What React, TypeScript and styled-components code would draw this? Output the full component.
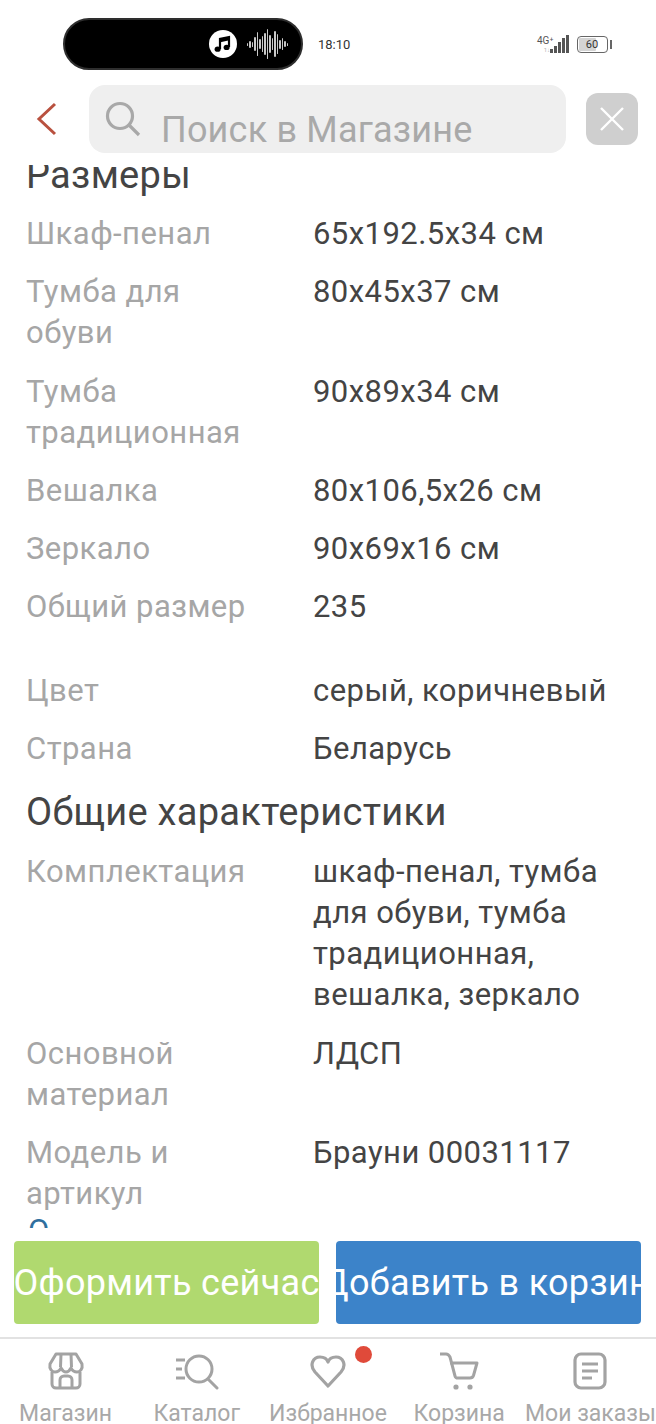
import React from "react"
import styled, { createGlobalStyle } from "styled-components"

const GlobalStyle = createGlobalStyle`
    html, body {
        margin: 0;
        padding: 0;
        background: #ffffff;
    }
    body {
        font-family: Roboto, "Noto Sans", sans-serif;
    }
`

interface ISpec {
    label: string;
    value: string;
}

const sizes: ISpec[] = [
    { label: "Шкаф-пенал", value: "65x192.5x34 см" },
    { label: "Тумба для обуви", value: "80x45x37 см" },
    { label: "Тумба традиционная", value: "90x89x34 см" },
    { label: "Вешалка", value: "80x106,5x26 см" },
    { label: "Зеркало", value: "90x69x16 см" },
    { label: "Общий размер", value: "235" },
]

const basics: ISpec[] = [
    { label: "Цвет", value: "серый, коричневый" },
    { label: "Страна", value: "Беларусь" },
]

const general: ISpec[] = [
    { label: "Комплектация", value: "шкаф-пенал, тумба для обуви, тумба традиционная, вешалка, зеркало" },
    { label: "Основной материал", value: "ЛДСП" },
    { label: "Модель и артикул", value: "Брауни 00031117" },
]

const waveBars = [3, 7, 5, 14, 24, 10, 16, 22, 30, 18, 12, 26, 20, 9, 12, 6, 3]

const SpecRows = ({ items }: { items: ISpec[] }) => (
    <>
        {items.map(item => (
            <Row key={item.label}>
                <RowLabel>{item.label}</RowLabel>
                <RowValue>{item.value}</RowValue>
            </Row>
        ))}
    </>
)

export default function App() {
    return (
        <Page>
            <GlobalStyle />

            {/* status bar */}
            <StatusBar>
                <Island>
                    <MusicBadge>
                        <svg width="20" height="20" viewBox="0 0 20 20" fill="none">
                            <path d="M7 15V5l9-2v10" stroke="#000" strokeWidth="2.2" />
                            <path d="M7 6.5l9-2" stroke="#000" strokeWidth="3.4" />
                            <ellipse cx="4.6" cy="15.2" rx="3" ry="2.6" fill="#000" />
                            <ellipse cx="13.6" cy="13.4" rx="3" ry="2.6" fill="#000" />
                        </svg>
                    </MusicBadge>
                    <Wave>
                        {waveBars.map((height, index) => (
                            <WaveBar key={index} $height={height} />
                        ))}
                    </Wave>
                </Island>
                <Clock>18:10</Clock>
                <StatusRight>
                    <NetworkLabel>
                        <span>4G⁺</span>
                        <small>1↓</small>
                    </NetworkLabel>
                    <Signal>
                        {[4, 7, 11, 15, 18].map(height => (
                            <SignalBar key={height} $height={height} />
                        ))}
                    </Signal>
                    <Battery>
                        <BatteryFill />
                        <BatteryText>60</BatteryText>
                    </Battery>
                    <BatteryNub />
                </StatusRight>
            </StatusBar>

            {/* search header */}
            <Header>
                <BackButton>
                    <svg width="22" height="34" viewBox="0 0 22 34" fill="none">
                        <path d="M19 2 3 17l16 15" stroke="#b9513f" strokeWidth="3" />
                    </svg>
                </BackButton>
                <SearchBox>
                    <svg width="36" height="36" viewBox="0 0 36 36" fill="none">
                        <circle cx="15" cy="15" r="12.5" stroke="#a8a8a8" strokeWidth="3.2" />
                        <path d="M24 24l10 10" stroke="#a8a8a8" strokeWidth="3.2" />
                    </svg>
                    <SearchText>Поиск в Магазине</SearchText>
                </SearchBox>
                <ClearButton>
                    <svg width="26" height="26" viewBox="0 0 26 26" fill="none">
                        <path d="M2 2l22 22M24 2 2 24" stroke="#fff" strokeWidth="2.4" />
                    </svg>
                </ClearButton>
            </Header>

            {/* scrolled list of specs, cut off on both sides */}
            <Scroller>
                <ScrollInner>
                    <SectionTitle>Размеры</SectionTitle>
                    <SpecRows items={sizes} />
                    <BasicsGroup>
                        <SpecRows items={basics} />
                    </BasicsGroup>
                    <GeneralTitle>Общие характеристики</GeneralTitle>
                    <SpecRows items={general} />
                    <NextLabel>О</NextLabel>
                </ScrollInner>
            </Scroller>

            <Actions>
                <ActionButton $color="#b0d96f">Оформить сейчас</ActionButton>
                <ActionButton $color="#3c83c9" $nudge={12}>Добавить в корзину</ActionButton>
            </Actions>

            <BottomNav>
                <NavItem>
                    <svg width="38" height="38" viewBox="0 0 38 38" fill="none" stroke="#a3a3a3" strokeWidth="3">
                        <path d="M9 2h20l6 10c1 5-2 8-5 8-3 0-5-2-6-4-1 2-3 4-5 4s-4-2-5-4c-1 2-3 4-6 4-3 0-6-3-5-8z" strokeLinejoin="round" />
                        <path d="M14 2 13.5 15M24 2l.5 13" />
                        <path d="M5 20v12a4 4 0 0 0 4 4h20a4 4 0 0 0 4-4V20" />
                        <path d="M13 36V28a4 4 0 0 1 4-4h4a4 4 0 0 1 4 4v8" />
                    </svg>
                    <NavLabel>Магазин</NavLabel>
                </NavItem>
                <NavItem>
                    <svg width="44" height="38" viewBox="0 0 44 38" fill="none" stroke="#a3a3a3" strokeWidth="3">
                        <circle cx="24" cy="17" r="13" />
                        <path d="M33 27l9 9" strokeLinecap="round" />
                        <path d="M1 8h9M1 17h6M1 26h9" />
                    </svg>
                    <NavLabel>Каталог</NavLabel>
                </NavItem>
                <NavItem>
                    <svg width="36" height="38" viewBox="0 0 36 38" fill="none" stroke="#a3a3a3" strokeWidth="3.2">
                        <path d="M18 34 5 20C-1 13 3 5 10 5c4 0 7 2 8 5 1-3 4-5 8-5 7 0 11 8 5 15z" strokeLinejoin="round" />
                    </svg>
                    <NavLabel>Избранное</NavLabel>
                    <NavDot />
                </NavItem>
                <NavItem>
                    <svg width="40" height="38" viewBox="0 0 40 38" fill="none" stroke="#a3a3a3" strokeWidth="3">
                        <path d="M1 2h6c2 0 3 1 4 3l5 19c.5 2 1 2 3 2h12c2 0 3-1 3.5-2.5L38 11H11" strokeLinejoin="round" />
                        <circle cx="17" cy="35" r="2.6" fill="#a3a3a3" stroke="none" />
                        <circle cx="31" cy="35" r="2.6" fill="#a3a3a3" stroke="none" />
                    </svg>
                    <NavLabel>Корзина</NavLabel>
                </NavItem>
                <NavItem>
                    <svg width="34" height="38" viewBox="0 0 34 38" fill="none" stroke="#a3a3a3" strokeWidth="3.2">
                        <rect x="2" y="2" width="30" height="34" rx="6" />
                        <path d="M9 12h16M9 19h16M9 26h10" strokeWidth="3" />
                    </svg>
                    <NavLabel>Мои заказы</NavLabel>
                </NavItem>
            </BottomNav>
        </Page>
    )
}

const Page = styled.div`
    width: 656px;
    height: 1424px;
    display: flex;
    flex-direction: column;
    overflow: hidden;
    background: #ffffff;
`

const StatusBar = styled.div`
    height: 85px;
    flex: none;
    display: flex;
    align-items: flex-start;
    padding: 18px 44px 0 63px;
    box-sizing: border-box;
`

const Island = styled.div`
    width: 240px;
    height: 52px;
    box-sizing: border-box;
    border: 2px solid #2e2e2e;
    border-radius: 26px;
    background: #000000;
    display: flex;
    align-items: center;
    justify-content: flex-end;
    gap: 10px;
    padding-right: 13px;
`

const MusicBadge = styled.div`
    width: 28px;
    height: 28px;
    border-radius: 50%;
    background: #ffffff;
    display: flex;
    align-items: center;
    justify-content: center;
`

const Wave = styled.div`
    display: flex;
    align-items: center;
    gap: 1px;
    height: 30px;
`

const WaveBar = styled.span<{ $height: number }>`
    width: 1.5px;
    height: ${props => props.$height}px;
    background: #c9c9c9;
    border-radius: 1px;
`

const Clock = styled.div`
    margin: 17px 0 0 15px;
    font-size: 13px;
    line-height: 20px;
    color: #333333;
`

const StatusRight = styled.div`
    margin: 15px 0 0 auto;
    display: flex;
    align-items: flex-end;
    height: 20px;
`

const NetworkLabel = styled.div`
    display: flex;
    flex-direction: column;
    font-size: 10px;
    line-height: 10px;
    color: #555555;
    width: 13px;
    white-space: nowrap;

    small {
        font-size: 6px;
        line-height: 7px;
        color: #b5b5b5;
        text-align: right;
    }
`

const Signal = styled.div`
    display: flex;
    align-items: flex-end;
    gap: 1.5px;
    margin-right: 8px;
`

const SignalBar = styled.span<{ $height: number }>`
    width: 2.5px;
    height: ${props => props.$height}px;
    background: #555555;
`

const Battery = styled.div`
    position: relative;
    width: 31px;
    height: 17px;
    box-sizing: border-box;
    border: 1.5px solid #666666;
    border-radius: 4px;
    display: flex;
    align-items: center;
    justify-content: center;
    overflow: hidden;
`

const BatteryFill = styled.div`
    position: absolute;
    left: 1px;
    top: 1px;
    bottom: 1px;
    width: 60%;
    background: #d4d4d4;
    border-radius: 1px;
`

const BatteryText = styled.span`
    position: relative;
    font-size: 11px;
    line-height: 12px;
    color: #333333;
`

const BatteryNub = styled.span`
    width: 2.5px;
    height: 9px;
    margin: 0 0 4px 2px;
    background: #666666;
`

const Header = styled.div`
    height: 80px;
    flex: none;
    display: flex;
    align-items: flex-start;
    box-sizing: border-box;
    padding: 0 18px 0 36px;
`

const BackButton = styled.div`
    width: 53px;
    flex: none;
    display: flex;
    margin-top: 17px;
`

const SearchBox = styled.div`
    width: 477px;
    height: 68px;
    flex: none;
    box-sizing: border-box;
    padding: 16px 0 0 16px;
    border-radius: 16px;
    background: #efefef;
    display: flex;
    align-items: flex-start;
    gap: 20px;
`

const SearchText = styled.div`
    margin-top: 8px;
    font-size: 36px;
    line-height: 42px;
    letter-spacing: 0.2px;
    color: #a9a9a9;
    white-space: nowrap;
`

const ClearButton = styled.div`
    width: 52px;
    height: 52px;
    flex: none;
    margin: 8px 0 0 20px;
    border-radius: 12px;
    background: #cfcfcf;
    display: flex;
    align-items: center;
    justify-content: center;
`

const Scroller = styled.div`
    height: 1063px;
    flex: none;
    overflow: hidden;
    padding: 0 26px;
`

const ScrollInner = styled.div`
    margin-top: -10px;
    font-size: 31px;
`

const SectionTitle = styled.h3`
    margin: 0 0 17px;
    font-size: 38px;
    font-weight: 400;
    line-height: 41px;
    letter-spacing: 0.3px;
    color: #444444;
`

const GeneralTitle = styled(SectionTitle)`
    margin: 23px 0 18px;
`

const Row = styled.div`
    display: flex;
    margin-bottom: 17.25px;
    line-height: 41px;
    letter-spacing: 0.45px;
`

const RowLabel = styled.div`
    width: 287px;
    flex: none;
    padding-right: 60px;
    box-sizing: border-box;
    color: #a6a6a6;
`

const RowValue = styled.div`
    flex: 1;
    color: #444444;
`

const NextLabel = styled.div`
    margin-top: -21px;
    padding-left: 2px;
    line-height: 41px;
    color: #2f6f9e;
`

const BasicsGroup = styled.div`
    padding-top: 25.5px;
`

const Actions = styled.div`
    height: 109px;
    flex: none;
    box-sizing: border-box;
    padding: 13px 15px 13px 14px;
    display: flex;
    gap: 17px;
`

const ActionButton = styled.div<{ $color: string; $nudge?: number }>`
    width: 305px;
    flex: none;
    box-sizing: border-box;
    padding-left: ${props => props.$nudge || 0}px;
    border-radius: 4px;
    background: ${props => props.$color};
    color: #ffffff;
    font-size: 36px;
    letter-spacing: 0.3px;
    white-space: nowrap;
    overflow: hidden;
    display: flex;
    align-items: center;
    justify-content: center;
`

const BottomNav = styled.div`
    flex: 1;
    display: grid;
    grid-template-columns: repeat(5, 1fr);
    border-top: 2px solid #e2e2e2;
    overflow: hidden;
`

const NavItem = styled.div`
    position: relative;
    display: flex;
    flex-direction: column;
    align-items: center;
    padding-top: 13px;
`

const NavLabel = styled.div`
    margin-top: 10px;
    font-size: 23px;
    line-height: 27px;
    color: #a8a8a8;
    white-space: nowrap;
`

const NavDot = styled.span`
    position: absolute;
    left: 93px;
    top: 7px;
    width: 17px;
    height: 17px;
    border-radius: 50%;
    background: #e04a3a;
`
